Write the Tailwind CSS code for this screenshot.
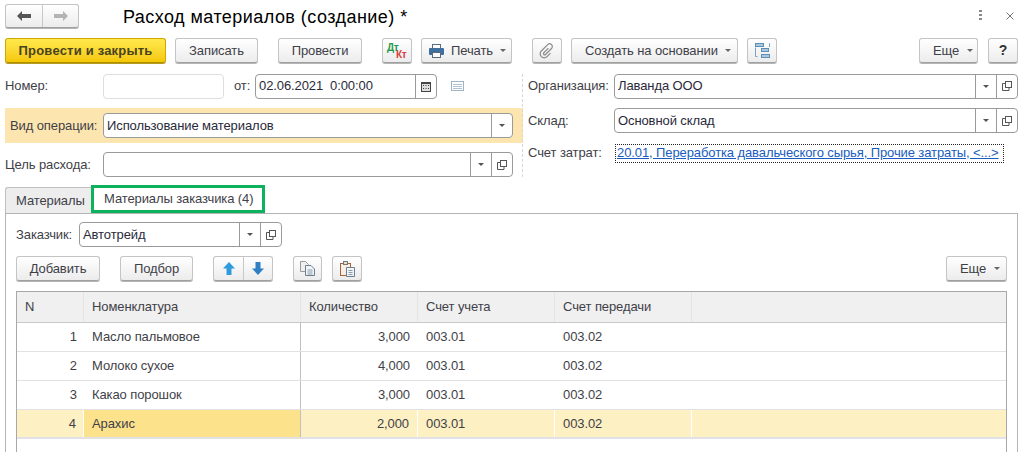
<!DOCTYPE html>
<html lang="ru">
<head>
  <meta charset="UTF-8" />
  <title>Расход материалов (создание)</title>
  <script src="https://cdn.jsdelivr.net/npm/@tailwindcss/browser@4"></script>
</head>
<body class="w-[1031px] h-[452px] overflow-hidden bg-white flex flex-col whitespace-nowrap font-['Liberation_Sans',Arial,sans-serif] text-[13px] tracking-[-0.1px] text-[#3f3f48]">

  <!-- title bar -->
  <div class="h-[38px] shrink-0 flex items-start pl-[5px] pt-[4px]">
    <div class="flex h-[24px] w-[74px] rounded-[3px] border border-[#c4c4c4] border-b-[#a0a0a0] bg-linear-to-b from-white to-[#ececec] shadow-[0_1px_0_#b5b5b5]">
      <div class="w-[37px] flex items-center justify-center border-r border-[#c8c8c8]">
        <svg width="14" height="10" viewBox="0 0 14 10"><path d="M0 5 L5 0 V3 H14 V7 H5 V10 Z" fill="#555"/></svg>
      </div>
      <div class="flex-1 flex items-center justify-center">
        <svg width="14" height="10" viewBox="0 0 14 10"><path d="M14 5 L9 0 V3 H0 V7 H9 V10 Z" fill="#b4b4b4"/></svg>
      </div>
    </div>
    <div class="ml-[44px] mt-[1px] text-[18px] leading-[24px] tracking-[0.45px] text-black">Расход материалов (создание) *</div>
    <div class="ml-auto mr-[24px] mt-[6px] flex flex-col gap-[2px]">
      <span class="w-[3px] h-[2px] bg-[#888]"></span><span class="w-[3px] h-[2px] bg-[#888]"></span><span class="w-[3px] h-[2px] bg-[#888]"></span>
    </div>
    <svg class="mr-[17px] mt-[8px]" width="8" height="8" viewBox="0 0 8 8"><path d="M0.5 0.5 L7.5 7.5 M7.5 0.5 L0.5 7.5" stroke="#777" stroke-width="1"/></svg>
  </div>

  <!-- command bar -->
  <div class="h-[26px] shrink-0 flex pl-[5px]">
    <button class="w-[161px] h-[25px] rounded-[3px] border border-[#d0a800] border-b-[#b08f00] bg-linear-to-b from-[#ffe94a] to-[#f5c800] font-bold tracking-[0.2px] text-[#4a4320] shadow-[0_1px_0_#b59a20]">Провести и закрыть</button>
    <button class="ml-[9px] w-[83px] h-[25px] rounded-[3px] border border-[#c4c4c4] border-b-[#a0a0a0] bg-linear-to-b from-white to-[#ececec] shadow-[0_1px_0_#b5b5b5]">Записать</button>
    <button class="ml-[20px] w-[84px] h-[25px] rounded-[3px] border border-[#c4c4c4] border-b-[#a0a0a0] bg-linear-to-b from-white to-[#ececec] shadow-[0_1px_0_#b5b5b5]">Провести</button>
    <button class="ml-[20px] w-[30px] h-[25px] rounded-[3px] border border-[#c4c4c4] border-b-[#a0a0a0] bg-linear-to-b from-white to-[#ececec] shadow-[0_1px_0_#b5b5b5] relative">
      <span class="absolute left-[4px] top-[4px] text-[10px] leading-[10px] tracking-[-0.4px] font-bold text-[#1d9a4c]">Дт</span>
      <span class="absolute left-[13px] top-[11px] text-[10px] leading-[10px] tracking-[-0.4px] font-bold text-[#d8403c]">Кт</span>
    </button>
    <button class="ml-[9px] w-[91px] h-[25px] rounded-[3px] border border-[#c4c4c4] border-b-[#a0a0a0] bg-linear-to-b from-white to-[#ececec] shadow-[0_1px_0_#b5b5b5] flex items-center pl-[7px]">
      <svg width="15" height="14" viewBox="0 0 15 14"><rect x="3.5" y="0.5" width="8" height="4" fill="#fff" stroke="#5a6b7d"/><rect x="0" y="4" width="15" height="7" rx="1" fill="#3f6f9e"/><rect x="3.5" y="8.5" width="8" height="5" fill="#fff" stroke="#5a6b7d"/></svg>
      <span class="ml-[7px]">Печать</span>
      <span class="ml-[7px] w-0 h-0 border-x-[3px] border-x-transparent border-t-[3px] border-t-[#666]"></span>
    </button>
    <button class="ml-[20px] w-[30px] h-[25px] rounded-[3px] border border-[#c4c4c4] border-b-[#a0a0a0] bg-linear-to-b from-white to-[#ececec] shadow-[0_1px_0_#b5b5b5] flex items-center justify-center">
      <svg width="14" height="14" viewBox="0 0 14 14" fill="none" class="overflow-visible"><g transform="translate(7 7) rotate(45)"><path d="M4 -1 V4 A4 4 0 0 1 -4 4 V-5 A2.7 2.7 0 0 1 1.4 -5 V3.5 A1.2 1.2 0 0 1 -1 3.5 V-3" stroke="#8a8a8a" stroke-width="1.2"/></g></svg>
    </button>
    <button class="ml-[9px] w-[167px] h-[25px] rounded-[3px] border border-[#c4c4c4] border-b-[#a0a0a0] bg-linear-to-b from-white to-[#ececec] shadow-[0_1px_0_#b5b5b5] flex items-center pl-[13px]">
      <span>Создать на основании</span>
      <span class="ml-[7px] w-0 h-0 border-x-[3px] border-x-transparent border-t-[3px] border-t-[#666]"></span>
    </button>
    <button class="ml-[9px] w-[30px] h-[25px] rounded-[3px] border border-[#c4c4c4] border-b-[#a0a0a0] bg-linear-to-b from-white to-[#ececec] shadow-[0_1px_0_#b5b5b5] flex items-center justify-center">
      <svg width="15" height="15" viewBox="0 0 15 15" fill="none"><path d="M0.5 4.500 V13.500 H2.500 M14 0.500 H14.500 V4" stroke="#7aa3c4"/><rect x="0.500" y="0.500" width="8" height="3" fill="#a9c8df" stroke="#5c8fb5"/><rect x="6.500" y="5.500" width="7" height="3" fill="#a9c8df" stroke="#5c8fb5"/><rect x="6.500" y="11.500" width="8" height="3" fill="#a9c8df" stroke="#5c8fb5"/></svg>
    </button>
    <button class="ml-[142px] w-[59px] h-[25px] rounded-[3px] border border-[#c4c4c4] border-b-[#a0a0a0] bg-linear-to-b from-white to-[#ececec] shadow-[0_1px_0_#b5b5b5] flex items-center pl-[13px]">
      <span>Еще</span>
      <span class="ml-[8px] w-0 h-0 border-x-[3px] border-x-transparent border-t-[3px] border-t-[#666]"></span>
    </button>
    <button class="ml-[10px] w-[30px] h-[25px] rounded-[3px] border border-[#c4c4c4] border-b-[#a0a0a0] bg-linear-to-b from-white to-[#ececec] shadow-[0_1px_0_#b5b5b5] font-bold text-[14px] text-[#333]">?</button>
  </div>

  <!-- header fields -->
  <div class="h-[112px] shrink-0 mt-[10px] flex">
    <div class="w-[518px] ml-[5px] shrink-0 flex flex-col">
      <div class="h-[24px] flex items-center">
        <span class="w-[98px]">Номер:</span>
        <div class="w-[121px] h-[25px] rounded-[4px] border border-[#dedede]"></div>
        <span class="ml-[10px] w-[21px]">от:</span>
        <div class="w-[182px] h-[25px] rounded-[4px] border border-[#9a9a9a] flex items-center">
          <span class="flex-1 pl-[3px] text-[#2a2a3a] whitespace-pre">02.06.2021  0:00:00</span>
          <div class="w-[21px] h-full border-l border-[#9a9a9a] flex items-center justify-center">
            <svg width="10" height="11" viewBox="0 0 10 11"><rect x="0" y="1" width="10" height="10" fill="#444"/><rect x="1" y="3" width="8" height="7" fill="#ddd"/><path d="M2 4h1v1H2zM4.500 4h1v1h-1zM7 4h1v1H7zM2 7h1v1H2zM4.500 7h1v1h-1zM7 7h1v1H7z" fill="#444"/></svg>
          </div>
        </div>
        <svg class="ml-[14px]" width="13" height="10" viewBox="0 0 13 10" fill="none"><rect x="0.500" y="0.500" width="12" height="9" stroke="#9fb3c6"/><path d="M2 3.500h9M2 5.500h9M2 7.500h9" stroke="#9fb3c6" stroke-width="0.8"/></svg>
      </div>
      <div class="mt-[10px] h-[35px] bg-[#fde5b0] flex items-center pl-[5px]">
        <span class="w-[93px]">Вид операции:</span>
        <div class="w-[410px] h-[25px] bg-white rounded-[4px] border border-[#9a9a9a] flex items-center">
          <span class="flex-1 pl-[3px] text-[#2a2a3a]">Использование материалов</span>
          <div class="w-[21px] h-full border-l border-[#9a9a9a] flex items-center justify-center">
            <span class="w-0 h-0 border-x-[3px] border-x-transparent border-t-[3px] border-t-[#555]"></span>
          </div>
        </div>
      </div>
      <div class="mt-[9px] h-[25px] flex items-center">
        <span class="w-[98px]">Цель расхода:</span>
        <div class="w-[410px] h-[25px] rounded-[4px] border border-[#9a9a9a] flex items-center">
          <span class="flex-1"></span>
          <div class="w-[21px] h-full border-l border-[#9a9a9a] flex items-center justify-center">
            <span class="w-0 h-0 border-x-[3px] border-x-transparent border-t-[3px] border-t-[#555]"></span>
          </div>
          <div class="w-[21px] h-full border-l border-[#9a9a9a] flex items-center justify-center">
            <svg width="10" height="10" viewBox="0 0 10 10" fill="none"><path d="M3.500 2.500H0.500V9.500H7V6.500" stroke="#555"/><rect x="3.500" y="0.500" width="6" height="6" fill="#fff" stroke="#555"/></svg>
          </div>
        </div>
      </div>
    </div>

    <div class="ml-[-1px] w-0 h-[103px] border-l border-dashed border-[#d8d8d8]"></div>

    <div class="ml-[5px] w-[490px] flex flex-col">
      <div class="h-[24px] flex items-center">
        <span class="w-[86px]">Организация:</span>
        <div class="w-[404px] h-[25px] rounded-[4px] border border-[#9a9a9a] flex items-center">
          <span class="flex-1 pl-[3px] text-[#2a2a3a]">Лаванда ООО</span>
          <div class="w-[21px] h-full border-l border-[#9a9a9a] flex items-center justify-center">
            <span class="w-0 h-0 border-x-[3px] border-x-transparent border-t-[3px] border-t-[#555]"></span>
          </div>
          <div class="w-[21px] h-full border-l border-[#9a9a9a] flex items-center justify-center">
            <svg width="10" height="10" viewBox="0 0 10 10" fill="none"><path d="M3.500 2.500H0.500V9.500H7V6.500" stroke="#555"/><rect x="3.500" y="0.500" width="6" height="6" fill="#fff" stroke="#555"/></svg>
          </div>
        </div>
      </div>
      <div class="mt-[10px] h-[25px] flex items-center">
        <span class="w-[86px]">Склад:</span>
        <div class="w-[404px] h-[25px] rounded-[4px] border border-[#9a9a9a] flex items-center">
          <span class="flex-1 pl-[3px] text-[#2a2a3a]">Основной склад</span>
          <div class="w-[21px] h-full border-l border-[#9a9a9a] flex items-center justify-center">
            <span class="w-0 h-0 border-x-[3px] border-x-transparent border-t-[3px] border-t-[#555]"></span>
          </div>
          <div class="w-[21px] h-full border-l border-[#9a9a9a] flex items-center justify-center">
            <svg width="10" height="10" viewBox="0 0 10 10" fill="none"><path d="M3.500 2.500H0.500V9.500H7V6.500" stroke="#555"/><rect x="3.500" y="0.500" width="6" height="6" fill="#fff" stroke="#555"/></svg>
          </div>
        </div>
      </div>
      <div class="mt-[11px] h-[18px] flex items-center">
        <span class="w-[88px]">Счет затрат:</span>
        <a class="w-[387px] h-[17px] outline-1 outline-dotted outline-[#222] pl-[1px] leading-[15px] underline text-[#1a5cc0]">20.01, Переработка давальческого сырья, Прочие затраты, &lt;...&gt;</a>
      </div>
    </div>
  </div>

  <!-- tabs -->
  <div class="h-[27px] shrink-0 ml-[5px] flex items-end">
    <div class="w-[86px] h-[26px] bg-[#ededed] border-l border-t border-[#c0c0c0] rounded-tl-[3px] flex items-center pl-[10px]">Материалы</div>
    <div class="w-[174px] h-[28px] border-[3px] border-[#0cb25c] flex items-center pl-[10px]">Материалы заказчика (4)</div>
  </div>

  <!-- tab page -->
  <div class="flex-1 min-h-0 ml-[5px] w-[1013px] border-l border-r border-t border-[#b4b4b4] flex flex-col pl-[10px] pr-[10px]">
    <div class="mt-[8px] h-[25px] flex items-center shrink-0">
      <span class="w-[63px]">Заказчик:</span>
      <div class="w-[203px] h-[25px] rounded-[4px] border border-[#9a9a9a] flex items-center">
        <span class="flex-1 pl-[3px] text-[#2a2a3a]">Автотрейд</span>
        <div class="w-[21px] h-full border-l border-[#9a9a9a] flex items-center justify-center">
          <span class="w-0 h-0 border-x-[3px] border-x-transparent border-t-[3px] border-t-[#555]"></span>
        </div>
        <div class="w-[21px] h-full border-l border-[#9a9a9a] flex items-center justify-center">
          <svg width="10" height="10" viewBox="0 0 10 10" fill="none"><path d="M3.500 2.500H0.500V9.500H7V6.500" stroke="#555"/><rect x="3.500" y="0.500" width="6" height="6" fill="#fff" stroke="#555"/></svg>
        </div>
      </div>
    </div>

    <div class="mt-[9px] h-[26px] flex shrink-0">
      <button class="w-[84px] h-[25px] rounded-[3px] border border-[#c4c4c4] border-b-[#a0a0a0] bg-linear-to-b from-white to-[#ececec] shadow-[0_1px_0_#b5b5b5]">Добавить</button>
      <button class="ml-[20px] w-[73px] h-[25px] rounded-[3px] border border-[#c4c4c4] border-b-[#a0a0a0] bg-linear-to-b from-white to-[#ececec] shadow-[0_1px_0_#b5b5b5]">Подбор</button>
      <div class="ml-[20px] w-[60px] h-[25px] flex rounded-[3px] border border-[#c4c4c4] border-b-[#a0a0a0] bg-linear-to-b from-white to-[#ececec] shadow-[0_1px_0_#b5b5b5]">
        <div class="w-[30px] flex items-center justify-center border-r border-[#c8c8c8]">
          <svg width="12" height="13" viewBox="0 0 12 13"><path d="M6 0 L12 6.500 H8.500 V13 H3.500 V6.500 H0 Z" fill="#2f9bdc"/></svg>
        </div>
        <div class="flex-1 flex items-center justify-center">
          <svg width="12" height="13" viewBox="0 0 12 13"><path d="M6 13 L12 6.500 H8.500 V0 H3.500 V6.500 H0 Z" fill="#2f7fc4"/></svg>
        </div>
      </div>
      <button class="ml-[20px] w-[29px] h-[25px] rounded-[3px] border border-[#c4c4c4] border-b-[#a0a0a0] bg-linear-to-b from-white to-[#ececec] shadow-[0_1px_0_#b5b5b5] flex items-center justify-center">
        <svg width="15" height="15" viewBox="0 0 15 15"><path d="M0.500 0.500H5.500L8.500 3.500V10.500H0.500Z" fill="#efefef" stroke="#9a9a9a"/><path d="M5.500 4.500H11L14.500 8V14.500H5.500Z" fill="#f2f5f7" stroke="#6d7f8f"/><path d="M7.500 9h5M7.500 11h5M7.500 13h5" stroke="#8a9aa8"/></svg>
      </button>
      <button class="ml-[10px] w-[30px] h-[25px] rounded-[3px] border border-[#c4c4c4] border-b-[#a0a0a0] bg-linear-to-b from-white to-[#ececec] shadow-[0_1px_0_#b5b5b5] flex items-center justify-center">
        <svg width="15" height="16" viewBox="0 0 15 16"><rect x="0.500" y="2.500" width="10" height="12" fill="#f7efe5" stroke="#a8623a"/><rect x="3.500" y="0.500" width="4" height="3" fill="#ddd" stroke="#777"/><path d="M6.500 6.500H14.500V15.500H6.500Z" fill="#f2f5f7" stroke="#6d7f8f"/><path d="M8.500 9.500h4M8.500 11.500h4M8.500 13.500h4" stroke="#8a9aa8"/></svg>
      </button>
      <button class="ml-auto w-[61px] h-[25px] rounded-[3px] border border-[#c4c4c4] border-b-[#a0a0a0] bg-linear-to-b from-white to-[#ececec] shadow-[0_1px_0_#b5b5b5] flex items-center pl-[13px]">
        <span>Еще</span>
        <span class="ml-[8px] w-0 h-0 border-x-[3px] border-x-transparent border-t-[3px] border-t-[#666]"></span>
      </button>
    </div>

    <!-- table -->
    <div class="mt-[9px] flex-1 min-h-0 border-l border-r border-t border-[#a8a8a8]">
      <div class="grid grid-cols-[67px_217px_117px_137px_137px_1fr] h-[31px] border-b border-[#c8c8c8] bg-white">
        <div class="bg-[#f0f0f0] border-r border-[#e4e4e4] flex items-center pl-[8px]">N</div>
        <div class="bg-[#f0f0f0] border-r border-[#e4e4e4] flex items-center pl-[8px]">Номенклатура</div>
        <div class="bg-[#f0f0f0] border-r border-[#e4e4e4] flex items-center pl-[8px]">Количество</div>
        <div class="bg-[#f0f0f0] border-r border-[#e4e4e4] flex items-center pl-[8px]">Счет учета</div>
        <div class="bg-[#f0f0f0] border-r border-[#e4e4e4] flex items-center pl-[8px]">Счет передачи</div>
        <div class="bg-[#f0f0f0]"></div>
      </div>
      <div class="grid grid-cols-[67px_217px_117px_137px_137px_1fr] h-[29px] border-b border-[#e2e2e6]">
        <div class="flex items-center justify-end pr-[7px]">1</div>
        <div class="flex items-center pl-[8px] border-r border-[#c0c0c0]">Масло пальмовое</div>
        <div class="flex items-center justify-end pr-[8px]">3,000</div>
        <div class="flex items-center pl-[8px]">003.01</div>
        <div class="flex items-center pl-[8px]">003.02</div>
        <div></div>
      </div>
      <div class="grid grid-cols-[67px_217px_117px_137px_137px_1fr] h-[29px] border-b border-[#e2e2e6]">
        <div class="flex items-center justify-end pr-[7px]">2</div>
        <div class="flex items-center pl-[8px] border-r border-[#c0c0c0]">Молоко сухое</div>
        <div class="flex items-center justify-end pr-[8px]">4,000</div>
        <div class="flex items-center pl-[8px]">003.01</div>
        <div class="flex items-center pl-[8px]">003.02</div>
        <div></div>
      </div>
      <div class="grid grid-cols-[67px_217px_117px_137px_137px_1fr] h-[29px] border-b border-[#e2e2e6]">
        <div class="flex items-center justify-end pr-[7px]">3</div>
        <div class="flex items-center pl-[8px] border-r border-[#c0c0c0]">Какао порошок</div>
        <div class="flex items-center justify-end pr-[8px]">3,000</div>
        <div class="flex items-center pl-[8px]">003.01</div>
        <div class="flex items-center pl-[8px]">003.02</div>
        <div></div>
      </div>
      <div class="grid grid-cols-[67px_217px_117px_137px_137px_1fr] h-[29px] border-b-2 border-[#e2e2e6] bg-white">
        <div class="bg-[#fdf0c2] border-r border-white flex items-center justify-end pr-[7px]">4</div>
        <div class="bg-[#fde28c] border-r border-[#c0c0c0] flex items-center pl-[8px]">Арахис</div>
        <div class="bg-[#fdf0c2] border-r border-white flex items-center justify-end pr-[8px]">2,000</div>
        <div class="bg-[#fdf0c2] border-r border-white flex items-center pl-[8px]">003.01</div>
        <div class="bg-[#fdf0c2] border-r border-white flex items-center pl-[8px]">003.02</div>
        <div class="bg-[#fdf0c2]"></div>
      </div>
    </div>
  </div>
</body>
</html>
